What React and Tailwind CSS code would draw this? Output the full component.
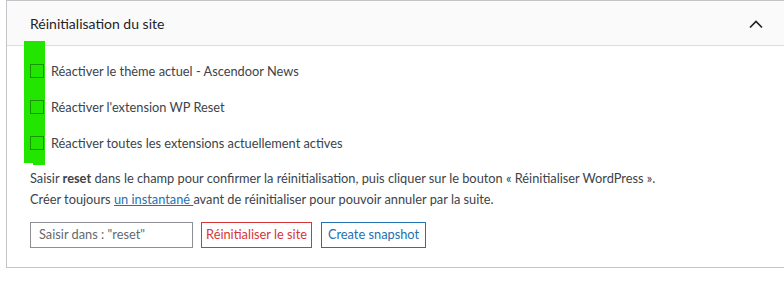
export default function App() {
  const font = { fontFamily: 'Lato, "Noto Sans", sans-serif' };
  const rows = [
    "Réactiver le thème actuel - Ascendoor News",
    "Réactiver l'extension WP Reset",
    "Réactiver toutes les extensions actuellement actives",
  ];
  return (
    <div className="w-[784px] h-[281px] overflow-hidden bg-white text-[#3c434a] pl-[6px]" style={font}>
      <div className="relative w-[800px] border-l border-t border-b border-[#c3c4c7] bg-white">
        <div className="h-[45px] bg-[#fafafa] border-b border-[#dcdcde] flex items-center pl-[23px] pr-[43px] justify-between">
          <h2 className="text-[14px] text-[#1d2327] font-normal">Réinitialisation du site</h2>
          <svg width="14" height="9" viewBox="0 0 14 9" className="mt-[2px]">
            <path d="M1 7.5 L7 1.5 L13 7.5" fill="none" stroke="#1d2327" strokeWidth="1.7" />
          </svg>
        </div>
        <div className="absolute left-[17px] top-[40px] w-[21px] h-[124px] bg-[#22e600]" />
        <div className="absolute left-[17px] top-[162px] w-[9px] h-[2px] bg-white" />
        <div className="relative pl-[23px] pt-[8px] pb-[19px] text-[12.8px]">
          {rows.map((r) => (
            <div key={r} className="h-[36px] flex items-center">
              <span className="w-[14px] h-[14px] border border-black/35 mr-[7px] -mt-[3px] shrink-0" />
              <span>{r}</span>
            </div>
          ))}
          <p className="mt-[6px] leading-[21px]">
            Saisir <strong className="font-bold">reset</strong> dans le champ pour confirmer la réinitialisation, puis cliquer sur le bouton « Réinitialiser WordPress ».
          </p>
          <p className="leading-[21px]">
            Créer toujours <a className="text-[#2271b1] underline">un instantané </a>avant de réinitialiser pour pouvoir annuler par la suite.
          </p>
          <div className="mt-[12px] flex items-center whitespace-nowrap">
            <div className="w-[163px] h-[26px] border border-[#8c8f94] flex items-center pl-[8px] text-[#646970]">
              Saisir dans : "reset"
            </div>
            <div className="ml-[8px] w-[111px] h-[26px] border border-[#d63638] text-[#d63638] flex items-center justify-center">
              Réinitialiser le site
            </div>
            <div className="ml-[9px] w-[105px] h-[26px] border border-[#2271b1] text-[#2271b1] flex items-center justify-center">
              Create snapshot
            </div>
          </div>
        </div>
      </div>
    </div>
  );
}
